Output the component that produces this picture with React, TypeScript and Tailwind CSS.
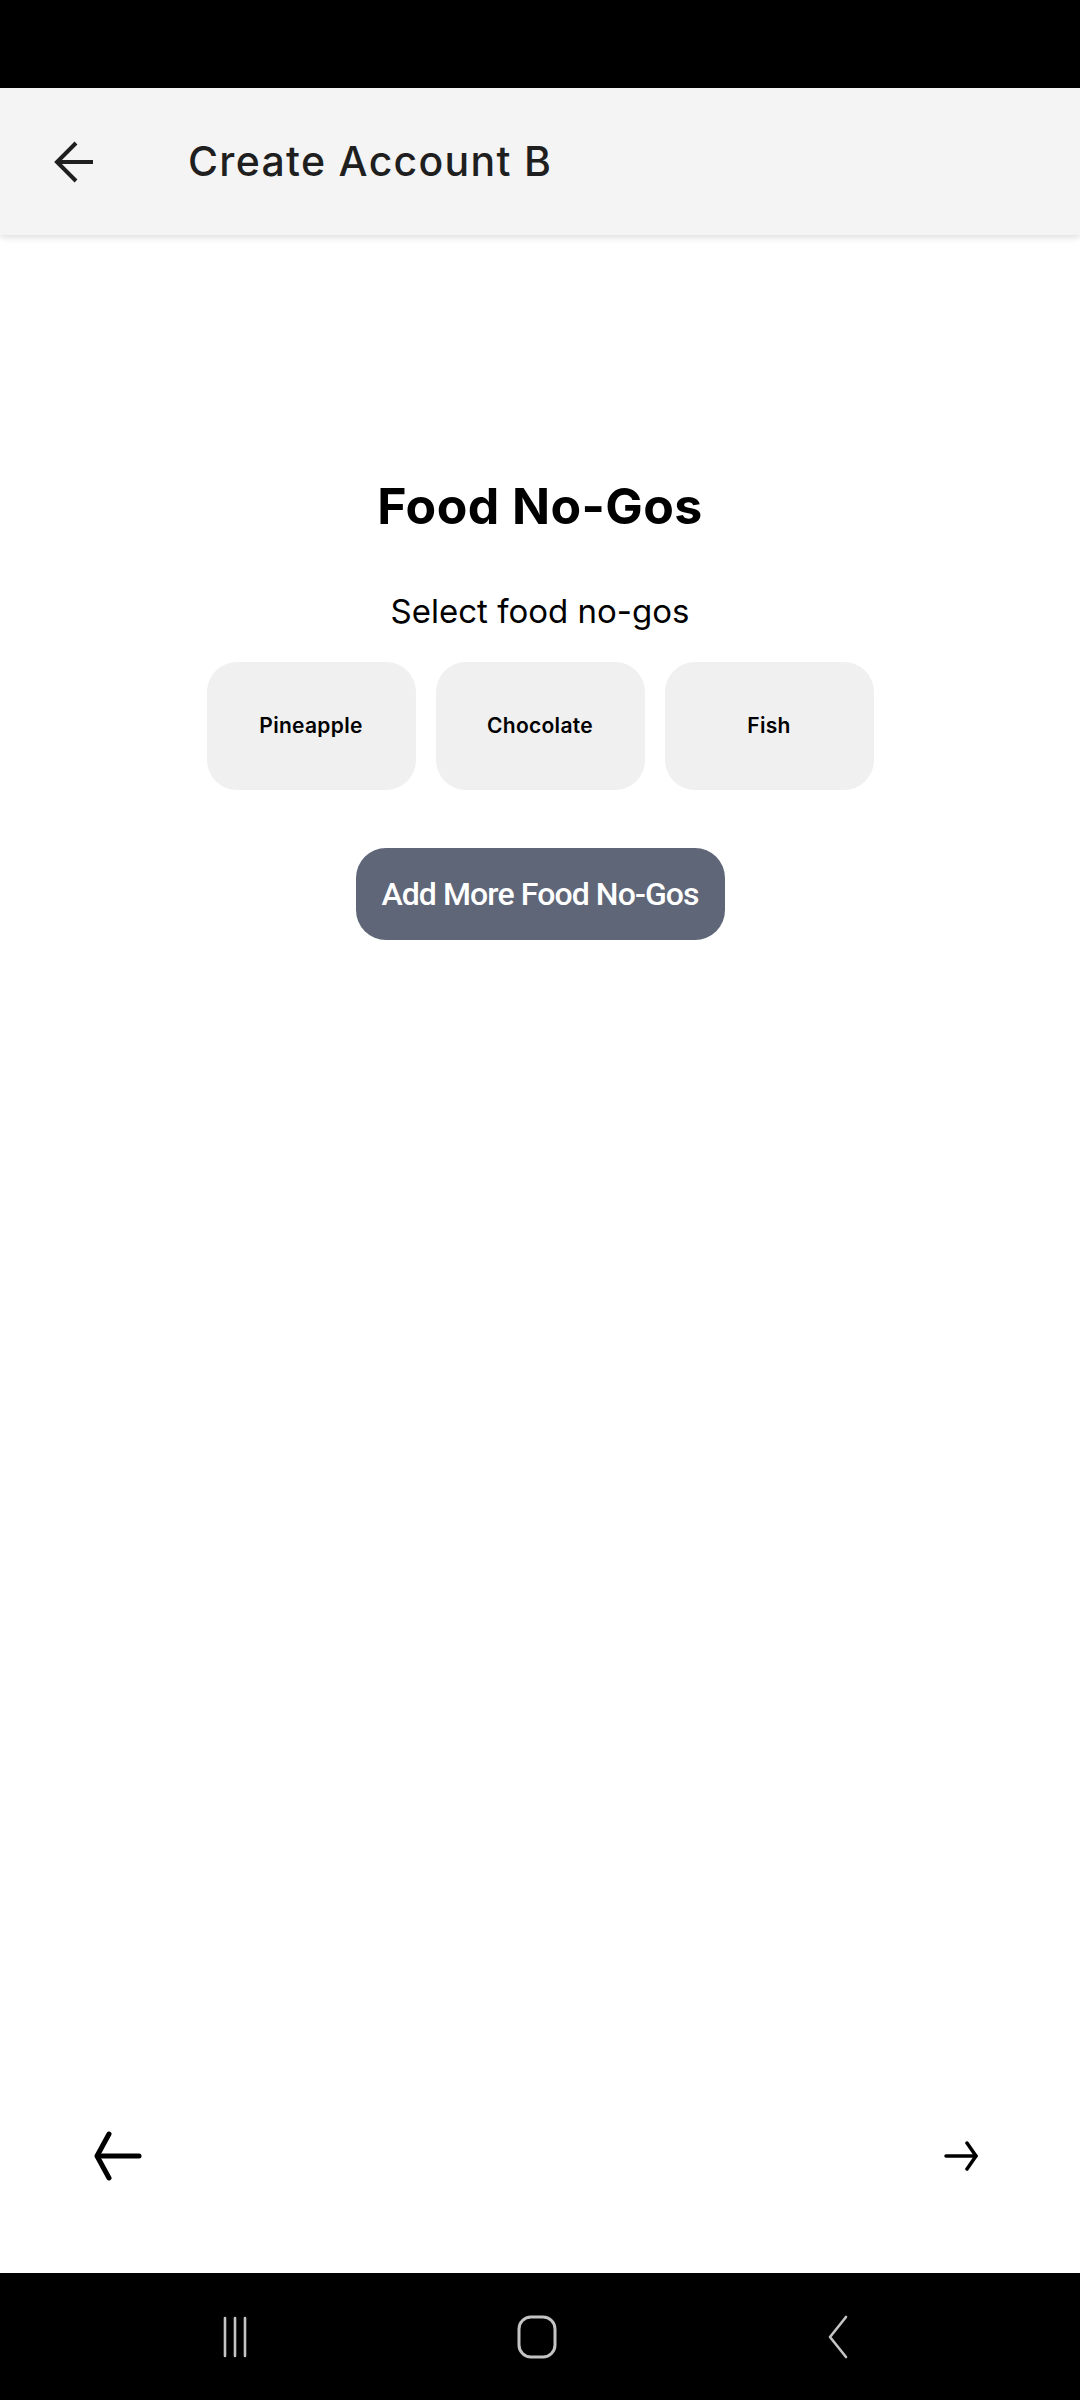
import { useState } from 'react';

const foods = ['Pineapple', 'Chocolate', 'Fish'];

// Onboarding step: pick foods the account holder won't eat.
export default function App() {
  const [selected, setSelected] = useState<string[]>([]);

  const toggle = (f: string) =>
    setSelected((s) => (s.includes(f) ? s.filter((x) => x !== f) : [...s, f]));

  return (
    <div className="flex h-[2400px] w-[1080px] flex-col bg-white" style={{ fontFamily: 'Inter, "Noto Sans", sans-serif' }}>
      {/* status bar */}
      <div className="h-[88px] shrink-0 bg-black" />

      {/* app bar */}
      <div className="relative z-10 flex h-[147px] shrink-0 items-center bg-[#f4f4f4] shadow-[0_3px_6px_rgba(0,0,0,0.12)]">
        <button className="ml-[50px] flex h-[48px] w-[48px] items-center justify-center text-[#1f1f1f]">
          <svg width="42" height="44" viewBox="0 0 42 44" fill="none" stroke="currentColor" strokeWidth="4">
            <path d="M40 22H5" />
            <path d="M23 3L4 22l19 19" />
          </svg>
        </button>
        <h1 className="ml-[90px] text-[41px] font-medium tracking-[1.3px] text-[#1f1f1f]">Create Account B</h1>
      </div>

      {/* content */}
      <div className="flex flex-1 flex-col items-center pt-[242px]">
        <h2 className="text-[50px] leading-[58px] font-bold tracking-[0.4px] text-black">Food No-Gos</h2>
        <p className="mt-[56px] text-[33px] leading-[40px] text-black">Select food no-gos</p>

        <div className="mt-[31px] flex gap-[20px]">
          {foods.map((f) => (
            <button
              key={f}
              onClick={() => toggle(f)}
              className={`flex h-[128px] w-[209px] items-center justify-center rounded-[30px] text-[21px] font-semibold tracking-[0.3px] text-black ${
                selected.includes(f) ? 'bg-[#dcdcdc]' : 'bg-[#f0f0f0]'
              }`}
            >
              {f}
            </button>
          ))}
        </div>

        <button
          className="mt-[58px] flex h-[92px] w-[369px] items-center justify-center rounded-[30px] bg-[#5e6678] text-[32px] font-medium tracking-[-0.9px] text-white"
          style={{ fontFamily: 'Roboto, sans-serif' }}
        >
          Add More Food No-Gos
        </button>

        <div className="flex-1" />

        {/* step navigation */}
        <div className="flex w-full items-center justify-between pr-[102px] pl-[94px] pb-[92px]">
          <svg width="48" height="50" viewBox="0 0 48 50" fill="none" stroke="black" strokeWidth="5" strokeLinecap="round" strokeLinejoin="round">
            <path d="M45 25H4" />
            <path d="M15 3L3 25l12 22" />
          </svg>
          <svg width="34" height="34" viewBox="0 0 34 34" fill="none" stroke="black" strokeWidth="3.5" strokeLinecap="round" strokeLinejoin="round">
            <path d="M2 17h30" />
            <path d="M23 4l9 13-9 13" />
          </svg>
        </div>
      </div>

      {/* system nav bar */}
      <div className="flex h-[127px] shrink-0 items-center justify-center bg-black">
        <div className="mr-[8px] flex items-center gap-[269px]">
          <svg width="26" height="42" viewBox="0 0 26 42" fill="none" stroke="#c4c4c4" strokeWidth="2.6" strokeLinecap="round">
            <path d="M3 2v38M13 2v38M23 2v38" />
          </svg>
          <svg width="40" height="44" viewBox="0 0 40 44" fill="none" stroke="#c4c4c4" strokeWidth="3">
            <rect x="2" y="2" width="36" height="40" rx="12" />
          </svg>
          <svg width="24" height="44" viewBox="0 0 24 44" fill="none" stroke="#c4c4c4" strokeWidth="2.6" strokeLinecap="round" strokeLinejoin="round">
            <path d="M20 2L4 22l16 20" />
          </svg>
        </div>
      </div>
    </div>
  );
}
